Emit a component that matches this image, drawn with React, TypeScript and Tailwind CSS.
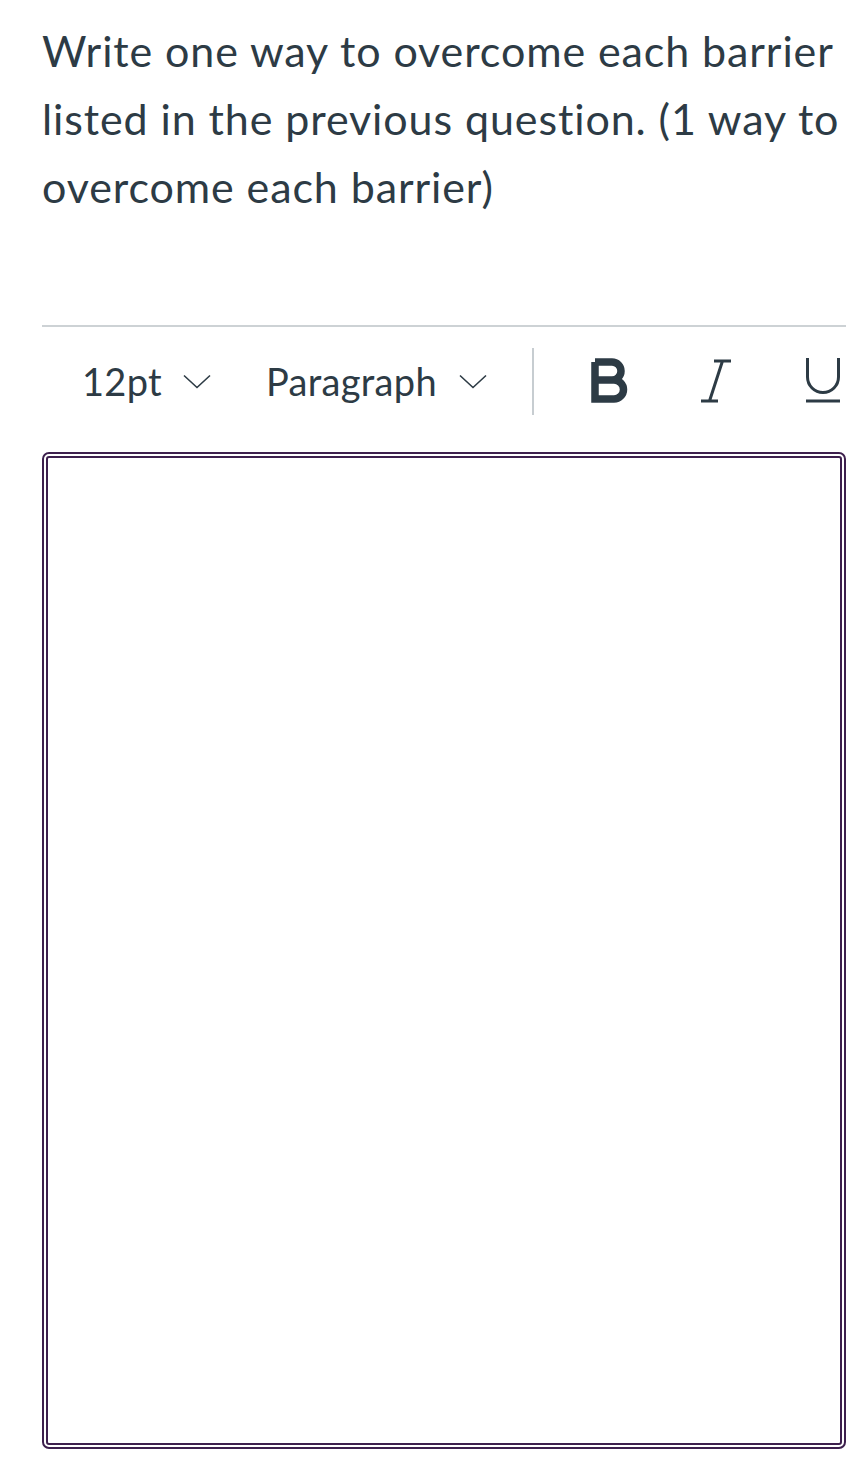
import React from 'react';

const Chevron = () => (
  <svg width="28" height="15" viewBox="0 0 28 15" fill="none" className="shrink-0">
    <path d="M1 1.5L14 13.5L27 1.5" stroke="#2d3b45" strokeWidth="1.6" />
  </svg>
);

const BoldIcon = () => (
  <svg width="38" height="46" viewBox="0 0 38 46" fill="none">
    <path
      d="M4 4H21a9 9 0 0 1 0 18H4M4 22H23a9.5 9.5 0 0 1 0 19H4V4"
      stroke="#2d3b45"
      strokeWidth="7.5"
      strokeLinejoin="miter"
    />
  </svg>
);

const ItalicIcon = () => (
  <svg width="32" height="46" viewBox="0 0 32 46" fill="none">
    <path d="M14 3H31M1 43H18M22.5 3L9.5 43" stroke="#2d3b45" strokeWidth="3" />
  </svg>
);

const UnderlineIcon = () => (
  <svg width="38" height="46" viewBox="0 0 38 46" fill="none">
    <path d="M3.5 0V19a15.5 15.5 0 0 0 31 0V0" stroke="#2d3b45" strokeWidth="3" />
    <path d="M2 43H36" stroke="#2d3b45" strokeWidth="3" />
  </svg>
);

export default function App() {
  return (
    <div className="min-h-screen bg-white font-['Lato','Noto_Sans',sans-serif] text-[#2d3b45]">
      <div className="pl-[42px] pr-[21px]">
        <p className="pt-[17px] text-[43px] leading-[68px] tracking-[0.9px]">
          Write one way to overcome each barrier listed in the previous question. (1 way to overcome each barrier)
        </p>

        <div className="mt-[104px] h-[2px] bg-[#cdd2d5]" />

        {/* toolbar */}
        <div className="flex h-[108px] items-center">
          <div className="ml-[40px] flex items-center gap-[21px] text-[38px]">
            <span className="w-[80px] whitespace-nowrap tracking-[0.3px]">12pt</span>
            <Chevron />
          </div>
          <div className="ml-[55px] flex items-center gap-[21px] text-[38px]">
            <span className="w-[172px] whitespace-nowrap tracking-[0.3px]">Paragraph</span>
            <Chevron />
          </div>
          <div className="ml-[45px] h-[67px] w-[2px] bg-[#c7cdd1]" />
          <div className="ml-[57px] flex items-center">
            <BoldIcon />
          </div>
          <div className="ml-[71px] flex items-center">
            <ItalicIcon />
          </div>
          <div className="ml-[72px] flex items-center">
            <UnderlineIcon />
          </div>
        </div>

        {/* editor */}
        <div className="mt-[17px] h-[997px] rounded-[7px] border-[6px] border-double border-[#3d1f4d]" />
      </div>
    </div>
  );
}
